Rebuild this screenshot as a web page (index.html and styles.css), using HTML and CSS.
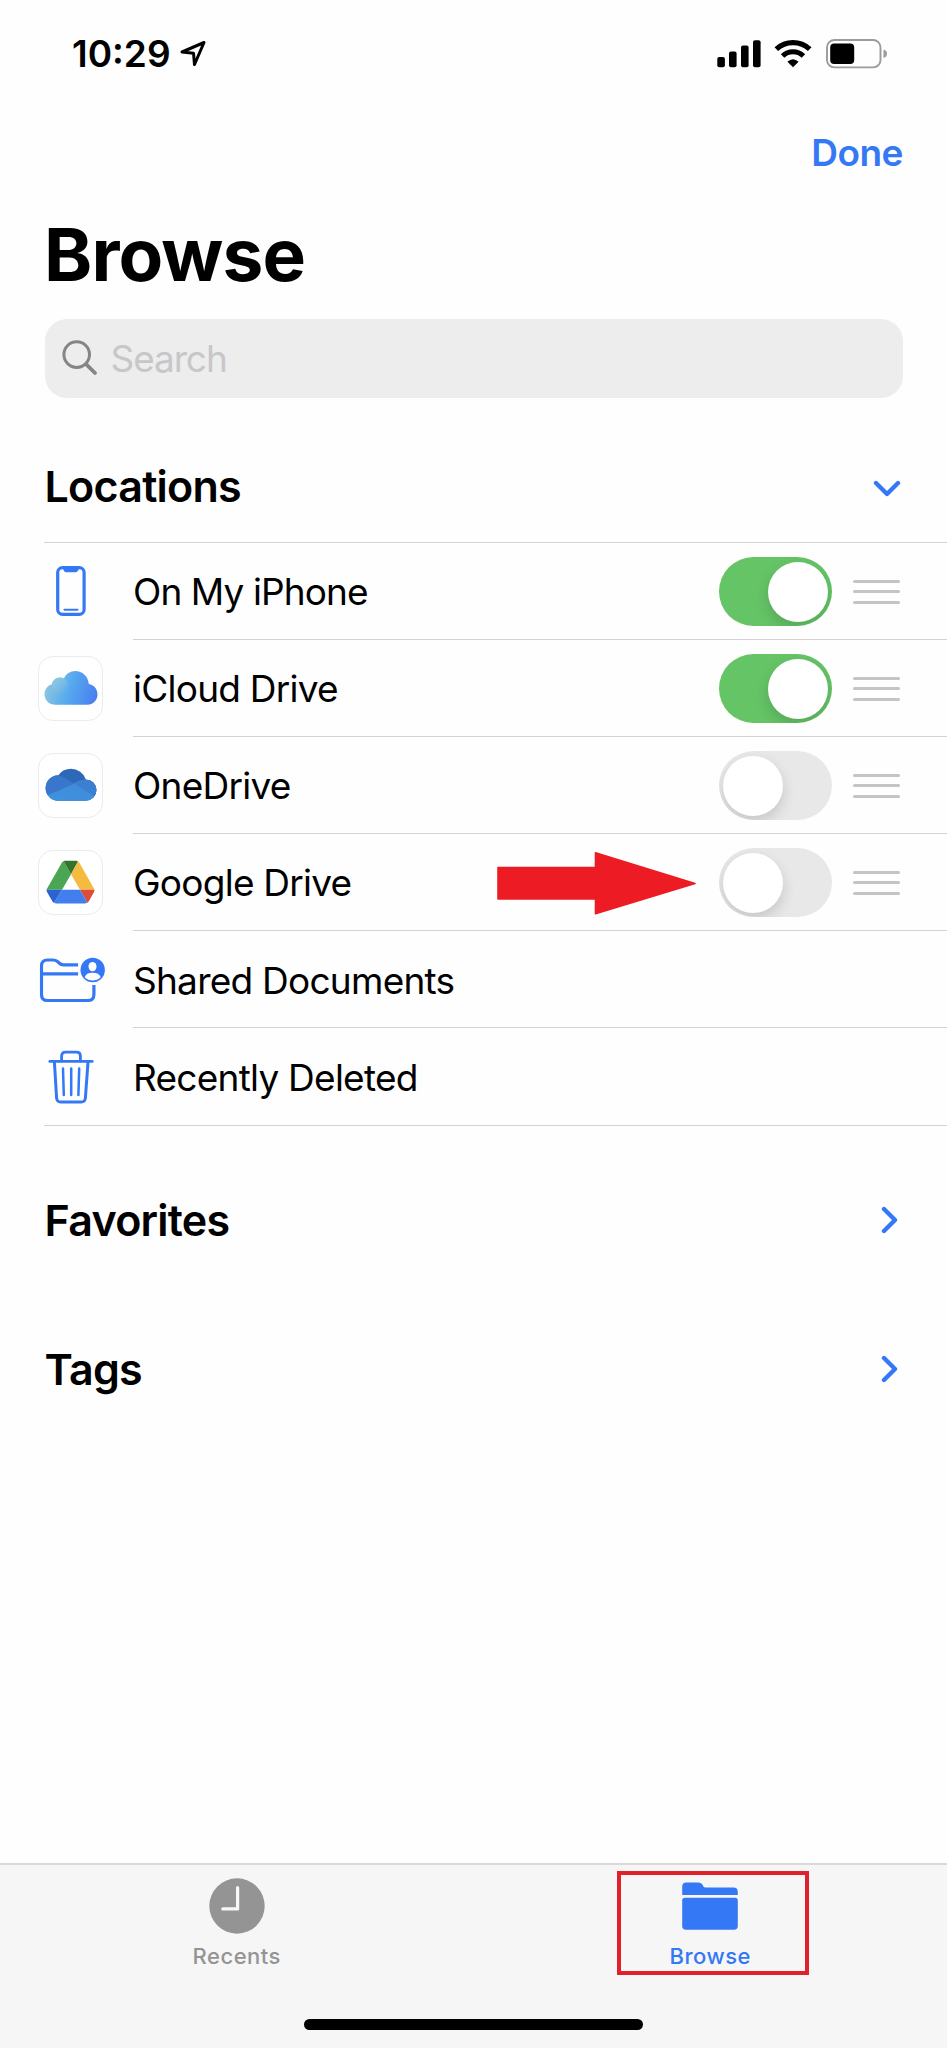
FILE: index.html
```
<!DOCTYPE html>
<html lang="en">
<head>
    <meta charset="UTF-8">
    <meta name="viewport" content="width=device-width, initial-scale=1.0">
    <title>Browse</title>
    <link rel="stylesheet" href="styles.css">
</head>
<body>
    <div class="screen">
        <div class="status-bar">
            <span class="time">10:29</span>
            <svg class="location" width="26" height="27" viewBox="0 0 26 27">
                <path d="M2 12 L24 2.5 L14.5 24.5 L13.5 13.2 Z" fill="none" stroke="#000" stroke-width="3" stroke-linejoin="round"/>
            </svg>
            <svg class="signal" width="44" height="28" viewBox="0 0 44 28">
                <rect x="0.3" y="17" width="7.6" height="10.2" rx="2"/>
                <rect x="12" y="11.6" width="7.6" height="15.6" rx="2"/>
                <rect x="24" y="5.6" width="7.6" height="21.6" rx="2"/>
                <rect x="36" y="0.2" width="7.6" height="27" rx="2"/>
            </svg>
            <svg class="wifi" width="38" height="28" viewBox="0 0 38 28">
                <path d="M2.3 9.2 A24.5 24.5 0 0 1 35.7 9.2" fill="none" stroke="#000" stroke-width="5.2"/>
                <path d="M8.6 16 A15 15 0 0 1 29.4 16" fill="none" stroke="#000" stroke-width="5"/>
                <path d="M13.4 21.8 Q19 16.6 24.6 21.8 L19 27.3 Z"/>
            </svg>
            <svg class="battery" width="62" height="30" viewBox="0 0 62 30">
                <rect x="1" y="1" width="53.5" height="27.4" rx="7.5" fill="none" stroke="#9b9b9b" stroke-width="1.9"/>
                <rect x="4.2" y="4.4" width="24" height="20.6" rx="4"/>
                <path d="M57.5 10.6 Q61 11.6 61 14.8 Q61 18 57.5 19 Z" fill="#9b9b9b"/>
            </svg>
        </div>

        <div class="nav-bar"><span class="done">Done</span></div>

        <h1>Browse</h1>

        <div class="search">
            <svg width="36" height="36" viewBox="0 0 36 36" fill="none" stroke="#858585" stroke-linecap="round">
                <circle cx="14.7" cy="14.6" r="12.8" stroke-width="3"/>
                <path d="M24.3 24.3 L33 33" stroke-width="3.8"/>
            </svg>
            <span>Search</span>
        </div>

        <div class="section locations">
            <h2>Locations</h2>
            <svg class="chevron-down" width="28" height="18" viewBox="0 0 28 18">
                <path d="M3 3 L14 14 L25 3"/>
            </svg>
        </div>

        <ul class="list">
            <li class="row">
                <div class="icon">
                    <svg width="30" height="50" viewBox="0 0 30 50">
                        <rect x="1.7" y="1.7" width="26.4" height="46.6" rx="4.8" fill="none" stroke="#3478f6" stroke-width="3.2"/>
                        <path d="M6 2 H24 C22.4 2.4 22.2 6.2 19.8 6.2 H10 C7.6 6.2 7.6 2.4 6 2 Z" fill="#3478f6"/>
                        <path d="M8.5 43.8 H21.5" stroke="#3478f6" stroke-width="2" stroke-linecap="round"/>
                    </svg>
                </div>
                <div class="content">
                    <span class="label phone">On My iPhone</span>
                    <span class="toggle on"></span>
                    <span class="handle"><i></i><i></i><i></i></span>
                </div>
            </li>
            <li class="row">
                <div class="icon">
                    <div class="tile">
                        <svg width="54" height="36" viewBox="0 0 54 36">
                            <defs>
                                <linearGradient id="cloud" x1="0" y1="0.4" x2="1" y2="0.6">
                                    <stop offset="0" stop-color="#8fc8df"/>
                                    <stop offset="0.5" stop-color="#56a8ee"/>
                                    <stop offset="1" stop-color="#4a7ff0"/>
                                </linearGradient>
                                <linearGradient id="puff" x1="0" y1="0" x2="0.6" y2="1">
                                    <stop offset="0" stop-color="#8dc6e2"/>
                                    <stop offset="1" stop-color="#8dc6e2" stop-opacity="0"/>
                                </linearGradient>
                            </defs>
                            <path d="M11.5 34.8 C5 34.8 0.5 30 0.5 24.3 C0.5 19 4 15.3 8 14.2 C8.4 10.4 12 7.5 16 7.5 C17.5 7.5 18.8 7.8 20 8.5 C22 3.8 26.3 1 31.2 1 C38.4 1 44.2 6.4 44.8 13.9 C50 14.6 53.5 19 53.5 24.5 C53.5 30.4 49 34.8 43.5 34.8 Z" fill="url(#cloud)"/>
                            <circle cx="16" cy="15.8" r="8.2" fill="url(#puff)"/>
                        </svg>
                    </div>
                </div>
                <div class="content">
                    <span class="label">iCloud Drive</span>
                    <span class="toggle on"></span>
                    <span class="handle"><i></i><i></i><i></i></span>
                </div>
            </li>
            <li class="row">
                <div class="icon">
                    <div class="tile">
                        <svg width="52" height="34" viewBox="0 0 52 34">
                            <defs>
                                <clipPath id="od">
                                    <circle cx="13.4" cy="20" r="12.8"/>
                                    <circle cx="26" cy="16.6" r="15.8"/>
                                    <circle cx="40.8" cy="22.1" r="10.7"/>
                                    <rect x="13" y="18" width="28" height="14.8"/>
                                </clipPath>
                                <linearGradient id="odb" x1="0" y1="1" x2="1" y2="0">
                                    <stop offset="0" stop-color="#3e93de"/>
                                    <stop offset="1" stop-color="#3f8bd9"/>
                                </linearGradient>
                            </defs>
                            <g clip-path="url(#od)">
                                <rect width="52" height="34" fill="#2d69b6"/>
                                <path d="M0 6 L13 7.2 C18 8.4 21 11 30 16 L4 27 L0 29 Z" fill="#3877cb"/>
                                <path d="M26 17 C31 13.5 35 11.4 42 11.4 L52 12 V32 Z" fill="#3c7ed0"/>
                                <path d="M2 27.5 L29.5 15.8 L50 29 L44 34 H8 Z" fill="url(#odb)"/>
                            </g>
                        </svg>
                    </div>
                </div>
                <div class="content">
                    <span class="label">OneDrive</span>
                    <span class="toggle"></span>
                    <span class="handle"><i></i><i></i><i></i></span>
                </div>
            </li>
            <li class="row">
                <div class="icon">
                    <div class="tile">
                        <svg width="49" height="44" viewBox="0 0 49 44">
                            <path d="M0.4 29.8 L14.8 4.4 Q16 1.4 17.6 0.9 L25 14.2 L16 29.8 Z" fill="#4aa653"/>
                            <path d="M17.6 0.9 Q18 0.8 19 0.8 H30 Q31.4 0.8 32 1.6 L25 14.2 Z" fill="#33752f"/>
                            <path d="M32 1.6 Q33 2.2 34 3.8 L48.6 29.8 H34 L25 14.2 Z" fill="#f5bb41"/>
                            <path d="M34 29.8 H48.6 Q48.4 31.4 47.6 32.8 L43 41 Q42.4 42.2 41.2 42.8 Z" fill="#db4d3d"/>
                            <path d="M16 29.8 H34 L41.2 42.8 Q40 43.6 38.6 43.6 H10.4 Q9 43.6 8 42.8 Z" fill="#437ef0"/>
                            <path d="M0.4 29.8 H16 L8 42.8 Q7 42.4 6.2 41 L1.4 32.8 Q0.6 31.4 0.4 29.8 Z" fill="#2c62d2"/>
                        </svg>
                    </div>
                </div>
                <div class="content">
                    <span class="label">Google Drive</span>
                    <svg class="arrow" width="200" height="64" viewBox="0 0 200 64">
                        <path d="M1 16.5 H98.5 V1.8 L198 32.4 L98.5 62.8 V48 H1 Z" fill="#ed1c24" stroke="#ed1c24" stroke-width="1.6" stroke-linejoin="round"/>
                    </svg>
                    <span class="toggle"></span>
                    <span class="handle"><i></i><i></i><i></i></span>
                </div>
            </li>
            <li class="row">
                <div class="icon">
                    <svg class="shared" width="66" height="46" viewBox="0 0 66 46">
                        <g fill="none" stroke="#3478f6" stroke-width="3.2">
                            <path d="M38.6 7.9 H24 Q21.5 7.9 19.6 6 L18 4.6 Q16 3 13.4 3 H8 Q2 3 2 9 V37.4 Q2 43.5 8 43.5 H48.4 Q54.4 43.5 54.4 37.4 V28"/>
                            <path d="M2 16.8 H38.6"/>
                        </g>
                        <circle cx="53.2" cy="13" r="12.2" fill="#3478f6"/>
                        <ellipse cx="53" cy="9.6" rx="4" ry="4.7" fill="#fff"/>
                        <path d="M45.2 20.2 Q46.6 15.8 53 15.8 Q59.6 15.8 61.2 20.2 Q57.8 23.4 53.2 23.4 Q48.6 23.4 45.2 20.2 Z" fill="#fff"/>
                    </svg>
                </div>
                <div class="content">
                    <span class="label">Shared Documents</span>
                </div>
            </li>
            <li class="row">
                <div class="icon">
                    <svg width="46" height="54" viewBox="0 0 46 54" fill="none" stroke="#3478f6" stroke-linecap="round">
                        <path d="M1.8 11.4 H44.2" stroke-width="2.8"/>
                        <path d="M13.6 11 V6 Q13.6 2.2 17.4 2.2 H28.6 Q32.4 2.2 32.4 6 V11" stroke-width="2.8"/>
                        <path d="M6.4 12 L8.6 48 Q8.9 52 12.8 52 H33.2 Q37.1 52 37.4 48 L40 12" stroke-width="3"/>
                        <path d="M15 18.6 L15.8 45 M23.2 18.6 V45 M31.2 18.6 L30.4 45" stroke-width="2.5"/>
                    </svg>
                </div>
                <div class="content">
                    <span class="label">Recently Deleted</span>
                </div>
            </li>
        </ul>

        <div class="section favorites">
            <h2>Favorites</h2>
            <svg class="chevron-right" width="18" height="28" viewBox="0 0 18 28">
                <path d="M3 3 L14 14 L3 25"/>
            </svg>
        </div>
        <div class="section tags">
            <h2>Tags</h2>
            <svg class="chevron-right" width="18" height="28" viewBox="0 0 18 28">
                <path d="M3 3 L14 14 L3 25"/>
            </svg>
        </div>

        <div class="tab-bar">
            <div class="tabs">
                <div class="tab">
                    <svg width="56" height="56" viewBox="0 0 56 56">
                        <circle cx="28" cy="28" r="27.7" fill="#949494"/>
                        <path d="M28.6 9.6 V30.9 H13.8" fill="none" stroke="#f7f7f7" stroke-width="3.2" stroke-linecap="round" stroke-linejoin="round"/>
                    </svg>
                    <span>Recents</span>
                </div>
                <div class="tab active">
                    <svg width="56" height="56" viewBox="0 0 56 56" fill="#3478f6">
                        <path d="M0.2 17 V8.6 Q0.2 4.4 4.4 4.4 H16 Q19 4.4 20.6 6.8 L21.4 8.6 Q22 9.6 23.6 9.6 H51.4 Q55.8 9.6 55.8 14 V17 Z"/>
                        <path d="M3 19.8 H53 Q55.8 19.8 55.8 22.6 V48 Q55.8 51.8 52 51.8 H4 Q0.2 51.8 0.2 48 V22.6 Q0.2 19.8 3 19.8 Z"/>
                    </svg>
                    <span>Browse</span>
                    <div class="highlight"></div>
                </div>
            </div>
            <div class="home-bar"></div>
        </div>
    </div>
</body>
</html>
```
FILE: styles.css
```
* {
    box-sizing: border-box;
}

body {
    margin: 0;
    background: #fefefe;
    font-family: Inter, 'Liberation Sans', sans-serif;
    color: #000;
}

.screen {
    width: 947px;
    height: 2048px;
    display: flex;
    flex-direction: column;
    overflow: hidden;
}

svg {
    display: block;
    flex: none;
}

/* Status bar */
.status-bar {
    display: flex;
    align-items: center;
    height: 107px;
    padding: 0 59px 0 72px;
}

.time {
    font-size: 37px;
    font-weight: 600;
    width: 108px;
}

.location {
    margin-right: auto;
}

.wifi {
    margin: 0 14px 0 13px;
}

.nav-bar {
    height: 90px;
    padding-right: 44px;
    display: flex;
    align-items: center;
    justify-content: flex-end;
}

.done {
    font-size: 37px;
    font-weight: 600;
    letter-spacing: -0.5px;
    color: #3478f6;
}

h1 {
    margin: 0;
    padding-left: 44px;
    font-size: 73px;
    line-height: 115px;
    font-weight: 700;
    letter-spacing: -0.9px;
}

.search {
    display: flex;
    align-items: center;
    gap: 13px;
    height: 79px;
    margin: 6.5px 44px 32.5px 44.5px;
    padding-left: 17px;
    border-radius: 22px;
    background: #ededed;
    font-size: 37px;
    letter-spacing: -1.1px;
    color: #c7c7c9;
}

/* Sections */
.section {
    display: flex;
    align-items: center;
    justify-content: space-between;
    height: 149.6px;
    padding: 0 48px 0 44.5px;
}

.section.locations {
    height: 112px;
    padding-right: 46px;
}

.section.favorites {
    margin-top: 18.5px;
}

h2 {
    margin: 0;
    font-size: 43px;
    font-weight: 600;
    letter-spacing: -0.75px;
}

.chevron-down,
.chevron-right {
    fill: none;
    stroke: #3478f6;
    stroke-width: 4.4;
    stroke-linecap: round;
    stroke-linejoin: round;
}

.chevron-down {
    margin-top: 6px;
}

.list {
    list-style: none;
    margin: 0 0 0 44px;
    padding: 0;
    border-top: 1px solid #d3d3d3;
    border-bottom: 1px solid #d3d3d3;
}

.row {
    display: flex;
    height: 97.2px;
}

.row:first-child {
    height: 96.5px;
}

.icon {
    width: 89px;
    display: flex;
    align-items: center;
    flex: none;
}

.icon > svg {
    margin: 0 auto;
    transform: translateX(-18px);
}

.icon > .shared {
    transform: translateX(-16.5px);
}

.tile {
    width: 65px;
    height: 65px;
    margin-left: -6px;
    border: 1px solid #ebebeb;
    border-radius: 15px;
    background: #fff;
    display: flex;
    align-items: center;
    justify-content: center;
}

.content {
    flex: 1;
    display: flex;
    align-items: center;
    padding: 2px 47px 0 0;
    border-bottom: 1px solid #d3d3d3;
}

.row:last-child .content {
    border-bottom: none;
}

.label {
    font-size: 37px;
    letter-spacing: -0.75px;
    white-space: nowrap;
    margin-right: auto;
}

.label.phone {
    letter-spacing: -0.9px;
}

/* Toggle switch */
.toggle {
    width: 113px;
    height: 69px;
    padding: 4.5px 4px;
    border-radius: 35px;
    background: #e8e8e8;
    overflow: hidden;
    flex: none;
}

.toggle::before {
    content: '';
    display: block;
    width: 60px;
    height: 60px;
    border-radius: 50%;
    background: #fff;
    box-shadow: 0 6px 14px rgba(0, 0, 0, 0.15);
}

.toggle.on {
    background: #65c466;
}

.toggle.on::before {
    margin-left: auto;
}

.handle {
    width: 47px;
    margin-left: 21px;
    display: flex;
    flex-direction: column;
    gap: 7.6px;
}

.handle i {
    height: 3px;
    border-radius: 2px;
    background: #c4c4c4;
}

.arrow {
    margin-right: 22.5px;
}

/* Tab bar */
.tab-bar {
    margin-top: auto;
    height: 185px;
    border-top: 2px solid #d9d9d9;
    background: #f6f6f6;
}

.tabs {
    display: flex;
    height: 154px;
}

.tab {
    position: relative;
    flex: 1;
    display: flex;
    flex-direction: column;
    align-items: center;
    padding-top: 13px;
    font-size: 22px;
    font-weight: 500;
    color: #949494;
}

.tab span {
    margin-top: 9px;
    letter-spacing: 0.5px;
}

.tab.active {
    color: #3478f6;
}

/* Red frame drawn over the active tab */
.highlight {
    position: absolute;
    top: 6px;
    left: 143px;
    width: 192px;
    height: 104px;
    border: 4px solid #e0202a;
}

.home-bar {
    width: 339px;
    height: 11px;
    margin: 0 auto;
    border-radius: 6px;
    background: #000;
}
```
